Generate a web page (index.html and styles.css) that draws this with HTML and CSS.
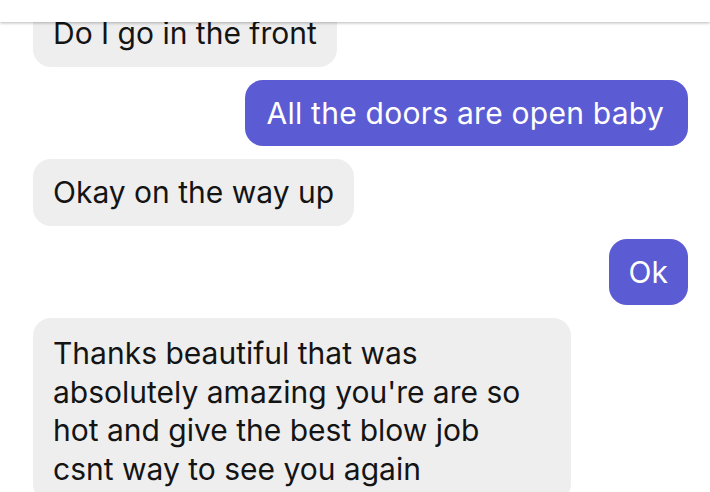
FILE: index.html
```html
<!DOCTYPE html>
<html lang="en">
<head>
<meta charset="utf-8">
<title>Chat</title>
<link rel="stylesheet" href="styles.css">
</head>
<body>
<div class="screen">
  <header class="topbar"></header>
  <main class="thread">
    <div class="msg in">Do I go in the front</div>
    <div class="msg out">All the doors are open baby</div>
    <div class="msg in">Okay on the way up</div>
    <div class="msg out short">Ok</div>
    <div class="msg in wide">Thanks beautiful that was absolutely amazing you're are so hot and give the best blow job csnt way to see you again</div>
  </main>
</div>
</body>
</html>
```
FILE: styles.css
```css
html, body {
  margin: 0;
  padding: 0;
  background: #fff;
}
.screen {
  position: relative;
  width: 710px;
  height: 492px;
  overflow: hidden;
  background: #fff;
  font-family: Inter, Roboto, "Noto Sans", sans-serif;
}
.topbar {
  position: absolute;
  top: 0;
  left: 0;
  right: 0;
  height: 22px;
  background: #fff;
  box-shadow: 0 1px 3px rgba(0,0,0,0.28);
  z-index: 2;
}
.thread {
  display: flex;
  flex-direction: column;
  gap: 13px;
  padding: 0 22px 0 33px;
}
.msg {
  box-sizing: border-box;
  max-width: 538px;
  padding: 14px 20px;
  font-size: 30px;
  line-height: 38.5px;
  border-radius: 18px;
  letter-spacing: 0;
}
.msg.in {
  align-self: flex-start;
  background: #eeeeee;
  color: #141414;
}
.msg.out {
  align-self: flex-end;
  background: #5b5bd3;
  color: #fff;
  padding: 14px 24px 14px 21px;
  letter-spacing: 0.25px;
}
.msg.out.short {
  padding: 14px 20px 14px 20px;
  letter-spacing: 0;
}
.msg.wide {
  width: 538px;
  padding: 16px 30px 14px 20px;
}
```
